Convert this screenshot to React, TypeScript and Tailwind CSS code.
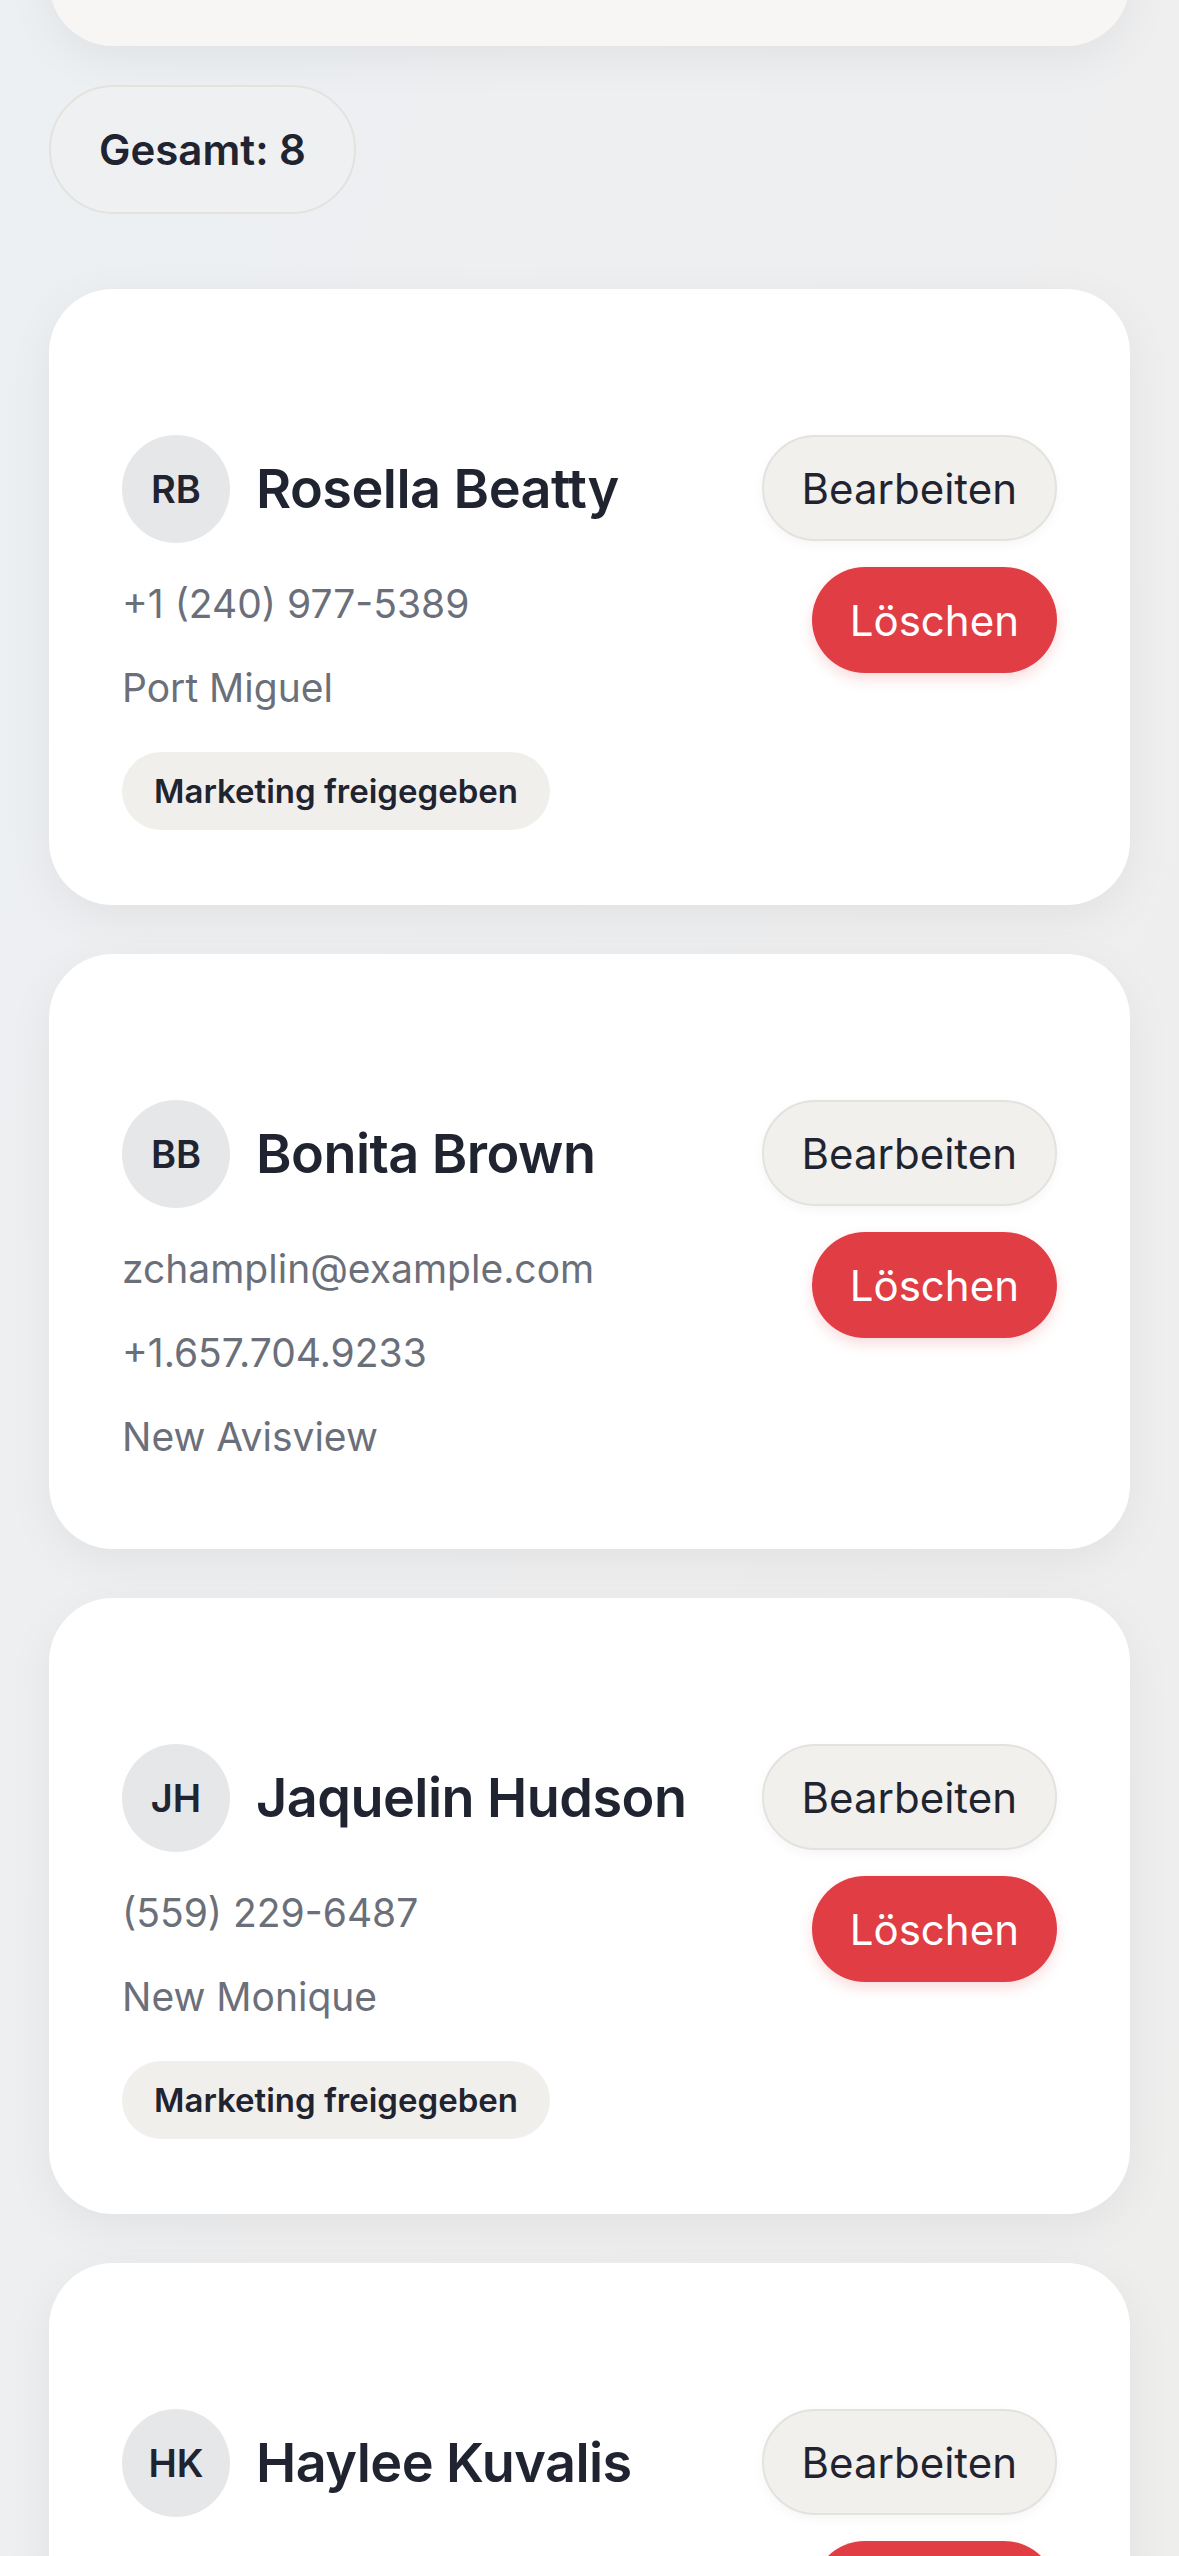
import React from 'react';

type Contact = {
  id: number;
  initials: string;
  name: string;
  email?: string;
  phone?: string;
  city?: string;
  marketing: boolean;
};

const contacts: Contact[] = [
  { id: 1, initials: 'RB', name: 'Rosella Beatty', phone: '+1 (240) 977-5389', city: 'Port Miguel', marketing: true },
  { id: 2, initials: 'BB', name: 'Bonita Brown', email: 'zchamplin@example.com', phone: '+1.657.704.9233', city: 'New Avisview', marketing: false },
  { id: 3, initials: 'JH', name: 'Jaquelin Hudson', phone: '(559) 229-6487', city: 'New Monique', marketing: true },
  { id: 4, initials: 'HK', name: 'Haylee Kuvalis', email: 'hkuvalis@example.net', phone: '917-555-0142', city: 'Lake Dorian', marketing: false },
];

function ContactCard({ contact }: { contact: Contact }) {
  const lines = [contact.email, contact.phone, contact.city].filter(Boolean) as string[];

  return (
    <div
      className={`rounded-[64px] bg-white px-[73px] pt-[146px] shadow-[0_12px_48px_rgba(0,0,0,0.06)] ${
        contact.marketing ? 'pb-[75px]' : 'pb-[84px]'
      }`}
    >
      <div className="flex items-start justify-between">
        <div className="flex flex-col">
          <div className="flex items-center gap-[26px]">
            <div className="flex h-[108px] w-[108px] shrink-0 items-center justify-center rounded-full bg-[#e6e7e9] text-[38px] font-semibold text-[#1f2430]">
              {contact.initials}
            </div>
            <h2 className="text-[54px] font-semibold leading-none tracking-[-0.01em] text-[#1f2430]">
              {contact.name}
            </h2>
          </div>
          <div className="mt-[33px] flex flex-col gap-[28px]">
            {lines.map((line) => (
              <p key={line} className="text-[39px] leading-[56px] text-[#6b6f7a]">
                {line}
              </p>
            ))}
            {contact.marketing && (
              <span className="mt-[8px] self-start rounded-full bg-[#f1efec] px-[32px] py-[19px] text-[33px] font-semibold leading-[40px] text-[#1f2430]">
                Marketing freigegeben
              </span>
            )}
          </div>
        </div>
        <div className="flex flex-col items-end gap-[26px]">
          <button className="h-[106px] rounded-full border-2 border-[#e4e2de] bg-[#f2f0ed] px-[38px] text-[42px] text-[#1f2430] shadow-[0_4px_12px_rgba(0,0,0,0.04)]">
            Bearbeiten
          </button>
          <button className="h-[106px] rounded-full bg-[#e03d45] px-[38px] text-[42px] text-white shadow-[0_6px_14px_rgba(224,61,69,0.18)]">
            Löschen
          </button>
        </div>
      </div>
    </div>
  );
}

export default function App() {
  return (
    <div
      className="min-h-screen overflow-hidden bg-gradient-to-br from-[#ecf0f3] via-[#efeff0] to-[#eeeeed] px-[49px] pb-[80px]"
      style={{ fontFamily: 'Inter, "Noto Sans", sans-serif' }}
    >
      <div className="-mt-[254px] h-[300px] rounded-[64px] bg-[#f7f6f5] shadow-[0_12px_48px_rgba(0,0,0,0.06)]" />

      <div className="mt-[39px] inline-flex h-[129px] items-center rounded-full border-2 border-[#e3e2df] bg-[#eef0f2] px-[48px] text-[42px] font-semibold text-[#1f2430]">
        Gesamt: 8
      </div>

      <div className="mt-[75px] flex flex-col gap-[49px]">
        {contacts.map((c) => (
          <ContactCard key={c.id} contact={c} />
        ))}
      </div>
    </div>
  );
}
